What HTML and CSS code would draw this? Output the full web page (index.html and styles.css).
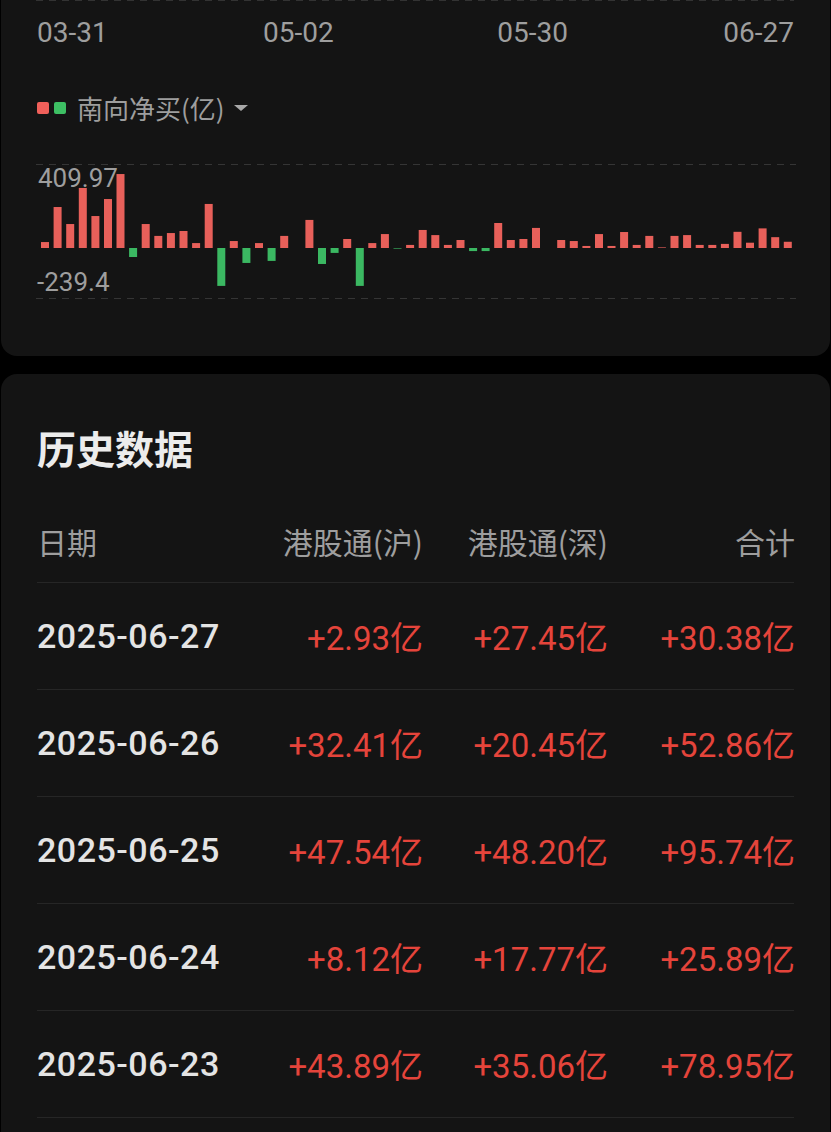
FILE: index.html
```html
<!doctype html>
<html>
<head>
    <title>南向资金</title>
    <meta charset="utf-8" />
    <meta name="viewport" content="width=device-width, initial-scale=1" />
    <link rel="stylesheet" href="styles.css">
</head>

<body>

<section class="card chart-card">
    <div class="grid-line"></div>
    <div class="axis">
        <span>03-31</span>
        <span>05-02</span>
        <span>05-30</span>
        <span>06-27</span>
    </div>
    <div class="legend">
        <span class="dot dot-up"></span>
        <span class="dot dot-down"></span>
        <span class="legend-text">南向净买(亿)</span>
        <span class="caret"></span>
    </div>
    <svg id="bars" class="bars" width="760" height="140" viewBox="0 0 760 140">
        <line class="dash" x1="0" y1="4.5" x2="760" y2="4.5" />
        <line class="dash" x1="0" y1="138.5" x2="760" y2="138.5" />
        <text class="bar-label" x="2" y="27">409.97</text>
        <text class="bar-label" x="1" y="131">-239.4</text>
    </svg>
</section>

<section class="card history">
    <h2>历史数据</h2>
    <div class="row head">
        <span>日期</span>
        <span class="num">港股通(沪)</span>
        <span class="num">港股通(深)</span>
        <span class="num">合计</span>
    </div>
    <div id="rows"></div>
</section>

<script>

// net buy per day, in 亿
var flows = [
    29, 200, 117, 293, 156, 239, 361, -44, 117, 59,
    73, 83, 24, 215, -185, 34, -73, 24, -63, 59,
    0, 137, -78, -24, 44, -185, 24, 68, -3, 15,
    88, 63, 15, 39, -15, -15, 122, 39, 44, 98,
    0, 39, 34, 10, 68, 10, 78, 15, 59, 3,
    59, 63, 15, 15, 20, 78.95, 25.89, 95.74, 52.86, 30.38
];

var records = [
    {date: "2025-06-27", sh: 2.93, sz: 27.45},
    {date: "2025-06-26", sh: 32.41, sz: 20.45},
    {date: "2025-06-25", sh: 47.54, sz: 48.20},
    {date: "2025-06-24", sh: 8.12, sz: 17.77},
    {date: "2025-06-23", sh: 43.89, sz: 35.06}
];

var chart = {
    zero: 88,
    scale: 84 / 409.97,
    pitch: 12.59,

    render: function(){
        var svg = document.getElementById("bars");
        var ns = "http://www.w3.org/2000/svg";
        var firstLabel = svg.querySelector("text");

        flows.forEach((v, i) => {
            var h = Math.abs(v) * this.scale;
            var rect = document.createElementNS(ns, "rect");
            rect.setAttribute("x", (5 + this.pitch * i).toFixed(1));
            rect.setAttribute("y", v >= 0 ? this.zero - h : this.zero);
            rect.setAttribute("width", 8);
            rect.setAttribute("height", h);
            rect.setAttribute("class", v >= 0 ? "up" : "down");
            svg.insertBefore(rect, firstLabel);
        });
    }
};

var table = {
    fmt: function(n){
        return (n >= 0 ? "+" : "") + n.toFixed(2) + "亿";
    },

    render: function(){
        var box = document.getElementById("rows");

        records.forEach(item => {
            var row = document.createElement("div");
            row.className = "row";
            row.innerHTML =
                '<span class="date">' + item.date + '</span>' +
                '<span class="num up">' + this.fmt(item.sh) + '</span>' +
                '<span class="num up">' + this.fmt(item.sz) + '</span>' +
                '<span class="num up">' + this.fmt(item.sh + item.sz) + '</span>';
            box.appendChild(row);
        });
    }
};

chart.render();
table.render();

</script>

</body>
</html>
```

FILE: styles.css
```css
body{
    margin:0;
    background-color:#000;
    font-family:"Noto Sans CJK SC", sans-serif;
    color:#e6e6e6;
}

.card{
    margin:0 1px;
    padding:0 36px;
    background-color:#141414;
    border-radius:16px;
}

.chart-card{
    border-radius:0 0 16px 16px;
    padding-bottom:56px;
}

.grid-line{
    height:1px;
    margin-left:-1px;
    background:repeating-linear-gradient(to right, #333 0 7px, transparent 7px 13px);
}

.axis{
    display:flex;
    justify-content:space-between;
    margin-top:15px;
    font-family:Roboto, sans-serif;
    font-size:28px;
    line-height:34px;
    color:#9e9e9e;
}

.axis span:nth-child(2){
    margin-right:8px;
}

.legend{
    display:flex;
    align-items:center;
    margin-top:42px;
    height:32px;
}

.dot{
    width:12px;
    height:12px;
    border-radius:2px;
    margin-right:5px;
}

.dot-up{
    background-color:#f0605a;
}

.dot-down{
    background-color:#3dbf63;
}

.legend-text{
    margin-left:6px;
    font-size:26px;
    line-height:32px;
    color:#9e9e9e;
}

.caret{
    margin-left:9px;
    border-left:7px solid transparent;
    border-right:7px solid transparent;
    border-top:6px solid #a8a8a8;
}

.bars{
    display:block;
    margin:36px 0 0 -1px;
}

.bars .dash{
    stroke:#353535;
    stroke-width:1;
    stroke-dasharray:7 6;
}

.bars .up{
    fill:#e8605a;
}

.bars .down{
    fill:#3bb862;
}

.bar-label{
    font-family:Roboto, sans-serif;
    font-size:26px;
    fill:#9e9e9e;
}

.history{
    margin-top:18px;
    padding-top:48px;
    padding-bottom:40px;
}

.history h2{
    margin:0;
    font-size:39px;
    line-height:50px;
    font-weight:700;
    color:#ececec;
}

.row{
    display:grid;
    grid-template-columns:186px 200px 185px 187px;
    align-items:center;
    height:107px;
    box-sizing:border-box;
    border-bottom:1px solid #262626;
    font-family:Roboto, "Noto Sans CJK SC", sans-serif;
    font-size:33px;
}

.row.head{
    height:84px;
    margin-top:27px;
    font-family:"Noto Sans CJK SC", sans-serif;
    font-size:30px;
    color:#9e9e9e;
}

.num{
    text-align:right;
}

.date{
    font-size:34px;
    letter-spacing:0.5px;
    font-weight:500;
    color:#e4e4e4;
}

.row .up{
    color:#e5443b;
}
```
